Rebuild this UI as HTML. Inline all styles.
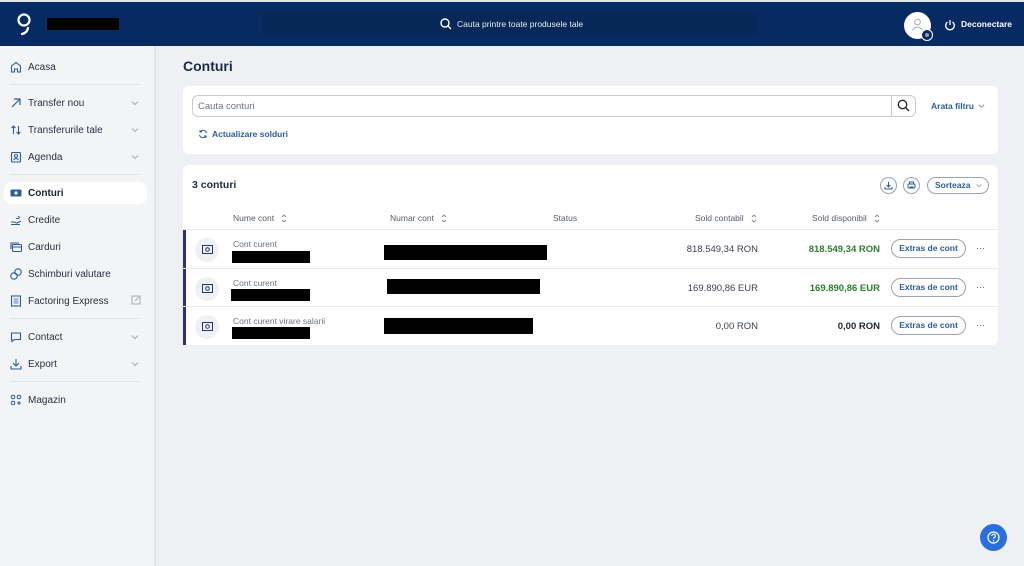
<!DOCTYPE html>
<html><head><meta charset="utf-8"><style>
*{box-sizing:border-box;margin:0;padding:0}
body{width:1024px;height:566px;overflow:hidden;background:#eef0f3;font-family:"Liberation Sans",sans-serif;position:relative;color:#1d2433}
.hdr{position:absolute;left:0;top:0;width:1024px;height:46px;background:#062a61;border-top:2px solid #dfe6ee}
.sb{position:absolute;left:0;top:46px;width:156px;height:520px;background:#f3f4f6;border-right:2px solid #e2e5ea}
.it{position:absolute;left:10px;font-size:10px;color:#2a3140;display:flex;align-items:center;gap:6px;height:14px}
.it svg{width:12px;height:12px}
.chev{position:absolute;left:131px;width:8px;height:8px}
.sep{position:absolute;left:10px;width:130px;height:1px;background:#e1e3e7}
.card{position:absolute;background:#fff;border-radius:6px}
.abs{position:absolute}
.blk{position:absolute;background:#000}
.th{position:absolute;top:213px;font-size:8.5px;color:#555c68;display:flex;align-items:center;gap:7px}
.row{position:absolute;left:183px;width:815px;border-top:1px solid #e8eaee;height:39px}
.bar{position:absolute;left:0;top:0;width:3px;height:100%;background:#2d2f7c}
.ic{position:absolute;left:12px;top:8px;width:24px;height:24px;border-radius:50%;background:#f0f1f4}
.btn{position:absolute;left:708px;top:9px;width:75px;height:19px;border:1px solid #9aa3b0;border-radius:10px;font-size:8.5px;color:#2b5d9e;text-align:center;line-height:17px;font-weight:bold}
.amt{position:absolute;right:240px;font-size:9.5px;color:#3a4150;top:14px}
.amt2{position:absolute;right:118px;font-size:9.5px;font-weight:bold;top:14px}
.dots{position:absolute;left:793px;top:13px;font-size:9px;color:#555}
.nm{position:absolute;left:50px;top:9px;font-size:8.5px;color:#6b7280}
</style></head><body>
<div class="hdr">
 <svg class="abs" style="left:16px;top:11px" width="16" height="24" viewBox="0 0 16 24"><circle cx="8" cy="7" r="5.5" fill="none" stroke="#fff" stroke-width="2.2"/><path d="M12 15 Q11 20 6 21" fill="none" stroke="#fff" stroke-width="2.2" stroke-linecap="round"/></svg>
 <div class="blk" style="left:47px;top:16px;width:72px;height:12px"></div>
 <div class="abs" style="left:262px;top:11px;width:496px;height:22px;background:#052858;border-radius:3px"></div>
 <svg class="abs" style="left:440px;top:16px" width="12" height="12" viewBox="0 0 12 12"><circle cx="5" cy="5" r="4" fill="none" stroke="#fff" stroke-width="1.4"/><path d="M8 8l3 3" stroke="#fff" stroke-width="1.4"/></svg>
 <div class="abs" style="left:457px;top:17px;font-size:8.5px;color:#e6ebf3">Cauta printre toate produsele tale</div>
 <div class="abs" style="left:904px;top:10px;width:27px;height:27px;border-radius:50%;background:#fff"></div>
 <svg class="abs" style="left:911px;top:16px" width="13" height="13" viewBox="0 0 13 13"><circle cx="6.5" cy="4" r="2.8" fill="none" stroke="#aaa"/><path d="M1.5 12 Q6.5 6 11.5 12" fill="none" stroke="#aaa"/></svg>
 <div class="abs" style="left:921px;top:27px;width:12px;height:12px;border-radius:50%;background:#062a61;border:1.5px solid #fff"></div>
 <div class="abs" style="left:925px;top:31px;width:4px;height:4px;border-radius:50%;background:#8d9bb0"></div>
 <svg class="abs" style="left:944px;top:17px" width="12" height="12" viewBox="0 0 12 12"><path d="M3.5 3A4.3 4.3 0 1 0 8.5 3" fill="none" stroke="#fff" stroke-width="1.3"/><path d="M6 1v5" stroke="#fff" stroke-width="1.3"/></svg>
 <div class="abs" style="left:961px;top:17px;font-size:8.5px;color:#fff;font-weight:bold">Deconectare</div>
</div>

<div class="sb">
 <div class="it" style="top:14px"><svg viewBox="0 0 12 12"><path d="M1.5 11V5L6 1.5 10.5 5v6H7.5V8h-3v3z" fill="none" stroke="#2b5d9e" stroke-width="1.1"/></svg>Acasa</div>
 <div class="sep" style="top:38px"></div>
 <div class="it" style="top:50px"><svg viewBox="0 0 12 12"><path d="M2 10L10 2M4 2h6v6" fill="none" stroke="#2b5d9e" stroke-width="1.2"/></svg>Transfer nou</div>
 <svg class="chev" style="top:53px" viewBox="0 0 8 8"><path d="M1 2.5l3 3 3-3" fill="none" stroke="#aaa"/></svg>
 <div class="it" style="top:77px"><svg viewBox="0 0 12 12"><path d="M3.5 10V2M1.5 4l2-2 2 2M8.5 2v8M6.5 8l2 2 2-2" fill="none" stroke="#2b5d9e" stroke-width="1.1"/></svg>Transferurile tale</div>
 <svg class="chev" style="top:80px" viewBox="0 0 8 8"><path d="M1 2.5l3 3 3-3" fill="none" stroke="#aaa"/></svg>
 <div class="it" style="top:104px"><svg viewBox="0 0 12 12"><rect x="1.5" y="1.5" width="9" height="9.5" rx="1" fill="none" stroke="#2b5d9e" stroke-width="1.1"/><circle cx="6" cy="5" r="1.5" fill="none" stroke="#2b5d9e"/><path d="M3.5 9q2.5-3 5 0" fill="none" stroke="#2b5d9e"/></svg>Agenda</div>
 <svg class="chev" style="top:107px" viewBox="0 0 8 8"><path d="M1 2.5l3 3 3-3" fill="none" stroke="#aaa"/></svg>
 <div class="sep" style="top:128px"></div>
 <div class="abs" style="left:4px;top:136px;width:143px;height:22px;background:#fff;border-radius:8px"></div>
 <div class="it" style="top:140px;font-weight:bold;color:#1d2433"><svg viewBox="0 0 12 12"><rect x="0.5" y="2.5" width="11" height="7" rx="1" fill="#2b5d9e"/><circle cx="6" cy="6" r="1.6" fill="#fff"/></svg>Conturi</div>
 <div class="it" style="top:167px"><svg viewBox="0 0 12 12"><path d="M1 8h3l3 1 4-2M1 10.5h9M8 2l2 2M6 4.5h3" fill="none" stroke="#2b5d9e" stroke-width="1.1"/></svg>Credite</div>
 <div class="it" style="top:194px"><svg viewBox="0 0 12 12"><rect x="2.5" y="3.5" width="9" height="7" rx="1" fill="none" stroke="#2b5d9e" stroke-width="1.1"/><path d="M1 8V2h8M2.5 6h9" fill="none" stroke="#2b5d9e" stroke-width="1.1"/></svg>Carduri</div>
 <div class="it" style="top:221px"><svg viewBox="0 0 12 12"><circle cx="4" cy="8" r="3.2" fill="none" stroke="#2b5d9e" stroke-width="1.1"/><circle cx="8" cy="4" r="3.2" fill="none" stroke="#2b5d9e" stroke-width="1.1"/></svg>Schimburi valutare</div>
 <div class="it" style="top:248px"><svg viewBox="0 0 12 12"><rect x="1.5" y="1" width="9" height="10" fill="none" stroke="#2b5d9e" stroke-width="1.1"/><path d="M3.5 4h5M3.5 6h5M3.5 8h5" stroke="#2b5d9e" stroke-width=".8"/></svg>Factoring Express</div>
 <svg class="abs" style="left:131px;top:249px" width="10" height="10" viewBox="0 0 10 10"><rect x="1" y="1" width="8" height="8" fill="none" stroke="#aaa"/><path d="M4 6l4-4" stroke="#aaa"/></svg>
 <div class="sep" style="top:272px"></div>
 <div class="it" style="top:284px"><svg viewBox="0 0 12 12"><path d="M1.5 2h9v6.5H4.5L2 10.5V8.5H1.5z" fill="none" stroke="#2b5d9e" stroke-width="1.1"/></svg>Contact</div>
 <svg class="chev" style="top:287px" viewBox="0 0 8 8"><path d="M1 2.5l3 3 3-3" fill="none" stroke="#aaa"/></svg>
 <div class="it" style="top:311px"><svg viewBox="0 0 12 12"><path d="M6 1v7M3 5l3 3 3-3M1 8v3h10V8" fill="none" stroke="#2b5d9e" stroke-width="1.1"/></svg>Export</div>
 <svg class="chev" style="top:314px" viewBox="0 0 8 8"><path d="M1 2.5l3 3 3-3" fill="none" stroke="#aaa"/></svg>
 <div class="sep" style="top:335px"></div>
 <div class="it" style="top:347px"><svg viewBox="0 0 12 12"><circle cx="3" cy="3" r="1.8" fill="none" stroke="#2b5d9e"/><circle cx="3" cy="9" r="1.8" fill="none" stroke="#2b5d9e"/><circle cx="9" cy="3" r="1.8" fill="none" stroke="#2b5d9e"/><path d="M9 7v4M7 9h4" stroke="#2b5d9e"/></svg>Magazin</div>
</div>

<div class="abs" style="left:183px;top:58px;font-size:14px;font-weight:bold;color:#1d2a44">Conturi</div>

<div class="card" style="left:183px;top:86px;width:815px;height:68px"></div>
<div class="abs" style="left:192px;top:95px;width:724px;height:22px;border:1px solid #c7ccd3;border-radius:6px;background:#fff"></div>
<div class="abs" style="left:891px;top:95px;width:1px;height:22px;background:#c7ccd3"></div>
<div class="abs" style="left:198px;top:101px;font-size:9.5px;color:#6b7280">Cauta conturi</div>
<svg class="abs" style="left:897px;top:99px" width="13" height="13" viewBox="0 0 13 13"><circle cx="5.5" cy="5.5" r="4.2" fill="none" stroke="#222" stroke-width="1.3"/><path d="M8.5 8.5l3.5 3.5" stroke="#222" stroke-width="1.3"/></svg>
<div class="abs" style="left:931px;top:101px;font-size:8.5px;color:#2b5d9e;font-weight:bold">Arata filtru</div>
<svg class="abs" style="left:978px;top:103px" width="7" height="6" viewBox="0 0 8 6"><path d="M1 1.5l3 3 3-3" fill="none" stroke="#888"/></svg>
<svg class="abs" style="left:198px;top:129px" width="10" height="10" viewBox="0 0 10 10"><path d="M8.5 4A3.6 3.6 0 0 0 2 3M1.5 6A3.6 3.6 0 0 0 8 7M2 1v2h2M8 9V7H6" fill="none" stroke="#2b5d9e" stroke-width="1"/></svg>
<div class="abs" style="left:212px;top:129px;font-size:8.5px;color:#2b5d9e;font-weight:bold">Actualizare solduri</div>

<div class="card" style="left:183px;top:165px;width:815px;height:180px;overflow:hidden"></div>
<div class="abs" style="left:192px;top:179px;font-size:10.5px;font-weight:bold;color:#1d2a44">3 conturi</div>
<div class="abs" style="left:880px;top:177px;width:17px;height:17px;border:1px solid #9aa3b0;border-radius:50%"></div>
<svg class="abs" style="left:884px;top:181px" width="9" height="9" viewBox="0 0 9 9"><path d="M4.5 1v5M2.5 4l2 2 2-2M1 6v2h7V6" fill="none" stroke="#2b5d9e" stroke-width="1"/></svg>
<div class="abs" style="left:903px;top:177px;width:17px;height:17px;border:1px solid #9aa3b0;border-radius:50%"></div>
<svg class="abs" style="left:907px;top:181px" width="9" height="9" viewBox="0 0 9 9"><rect x="1" y="3" width="7" height="4" rx="1" fill="none" stroke="#2b5d9e"/><path d="M2.5 3V1h4v2M2.5 6h4" fill="none" stroke="#2b5d9e"/></svg>
<div class="abs" style="left:927px;top:177px;width:62px;height:17px;border:1px solid #9aa3b0;border-radius:9px;font-size:8.5px;color:#2b5d9e;font-weight:bold;line-height:15px;padding-left:7px">Sorteaza</div>
<svg class="abs" style="left:976px;top:183px" width="6" height="5" viewBox="0 0 8 6"><path d="M1 1.5l3 3 3-3" fill="none" stroke="#888"/></svg>

<div class="th" style="left:233px">Nume cont <svg width="6" height="9" viewBox="0 0 6 9"><path d="M1 3l2-2 2 2M1 6l2 2 2-2" fill="none" stroke="#888" stroke-width=".9"/></svg></div>
<div class="th" style="left:390px">Numar cont <svg width="6" height="9" viewBox="0 0 6 9"><path d="M1 3l2-2 2 2M1 6l2 2 2-2" fill="none" stroke="#888" stroke-width=".9"/></svg></div>
<div class="th" style="left:553px">Status</div>
<div class="th" style="left:695px">Sold contabil <svg width="6" height="9" viewBox="0 0 6 9"><path d="M1 3l2-2 2 2M1 6l2 2 2-2" fill="none" stroke="#888" stroke-width=".9"/></svg></div>
<div class="th" style="left:812px">Sold disponibil <svg width="6" height="9" viewBox="0 0 6 9"><path d="M1 3l2-2 2 2M1 6l2 2 2-2" fill="none" stroke="#888" stroke-width=".9"/></svg></div>

<div class="row" style="top:229px"><div class="bar"></div><div class="ic"></div>
 <svg class="abs" style="left:19px;top:15px" width="11" height="9" viewBox="0 0 11 9"><rect x=".5" y=".5" width="10" height="8" fill="none" stroke="#2d2f7c"/><circle cx="5.5" cy="4.5" r="1.8" fill="none" stroke="#2d2f7c"/></svg>
 <div class="nm">Cont curent</div><div class="blk" style="left:49px;top:21px;width:78px;height:12px"></div>
 <div class="blk" style="left:201px;top:15px;width:163px;height:15px"></div>
 <div class="amt">818.549,34 RON</div><div class="amt2" style="color:#2e7d32">818.549,34 RON</div>
 <div class="btn">Extras de cont</div><div class="dots">···</div></div>
<div class="row" style="top:268px"><div class="bar"></div><div class="ic"></div>
 <svg class="abs" style="left:19px;top:15px" width="11" height="9" viewBox="0 0 11 9"><rect x=".5" y=".5" width="10" height="8" fill="none" stroke="#2d2f7c"/><circle cx="5.5" cy="4.5" r="1.8" fill="none" stroke="#2d2f7c"/></svg>
 <div class="nm">Cont curent</div><div class="blk" style="left:48px;top:20px;width:79px;height:12px"></div>
 <div class="blk" style="left:204px;top:10px;width:153px;height:15px"></div>
 <div class="amt">169.890,86 EUR</div><div class="amt2" style="color:#2e7d32">169.890,86 EUR</div>
 <div class="btn">Extras de cont</div><div class="dots">···</div></div>
<div class="row" style="top:306px;height:39px"><div class="bar" style="height:38px"></div><div class="ic"></div>
 <svg class="abs" style="left:19px;top:15px" width="11" height="9" viewBox="0 0 11 9"><rect x=".5" y=".5" width="10" height="8" fill="none" stroke="#2d2f7c"/><circle cx="5.5" cy="4.5" r="1.8" fill="none" stroke="#2d2f7c"/></svg>
 <div class="nm">Cont curent virare salarii</div><div class="blk" style="left:49px;top:20px;width:78px;height:12px"></div>
 <div class="blk" style="left:201px;top:11px;width:149px;height:16px"></div>
 <div class="amt">0,00 RON</div><div class="amt2" style="color:#1d2433">0,00 RON</div>
 <div class="btn">Extras de cont</div><div class="dots">···</div></div>

<div class="abs" style="left:980px;top:524px;width:27px;height:27px;border-radius:50%;background:#2a6fdb"></div>
<svg class="abs" style="left:987px;top:531px" width="13" height="13" viewBox="0 0 13 13"><circle cx="6.5" cy="6.5" r="5.5" fill="none" stroke="#fff" stroke-width="1.2"/><path d="M4.8 5a1.8 1.8 0 1 1 2.4 1.6c-.6.3-.7.6-.7 1.3" fill="none" stroke="#fff" stroke-width="1.1"/><circle cx="6.5" cy="9.7" r=".7" fill="#fff"/></svg>
</body></html>
